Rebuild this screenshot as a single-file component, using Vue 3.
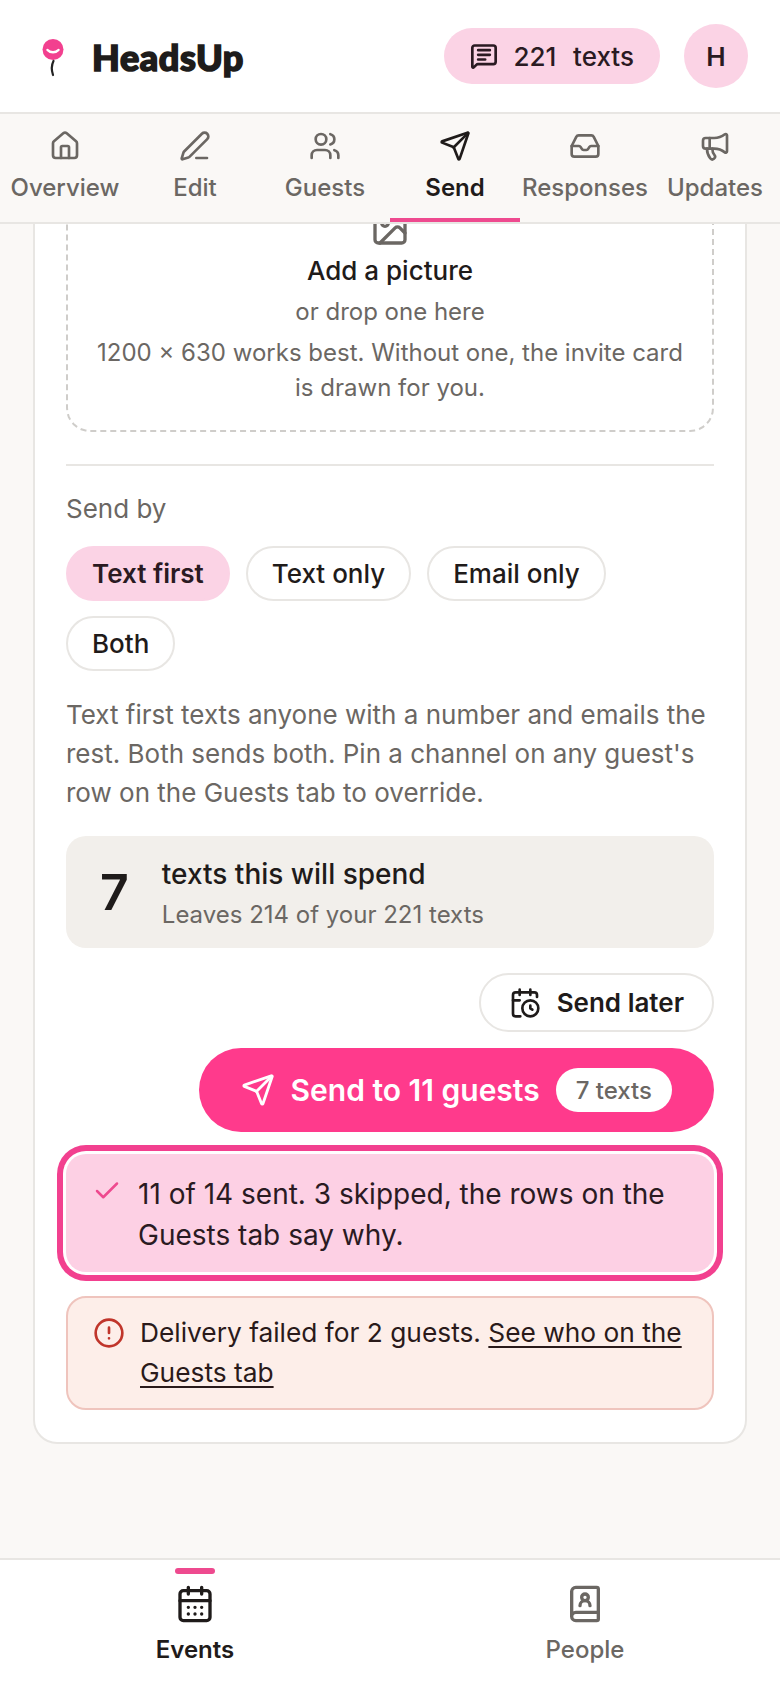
<template>
  <div class="app">
    <header class="topbar">
      <div class="brand">
        <svg class="balloon" width="28" height="44" viewBox="0 0 28 44" fill="none">
          <circle cx="14" cy="11.5" r="10.5" fill="#F2408F" />
          <path d="M8.5 12c2.500 3 8.500 3 11 0" stroke="#FFF" stroke-width="2.4" stroke-linecap="round" />
          <path d="M14.500 23c-2 4-2.500 8-.500 14" stroke="#222" stroke-width="2.200" stroke-linecap="round" />
        </svg>
        <span class="wordmark">HeadsUp</span>
      </div>
      <div class="top-right">
        <div class="credits">
          <svg class="ico credits-ico" viewBox="0 0 24 24">
            <path d="M22 17a2 2 0 0 1-2 2H6.828a2 2 0 0 0-1.414.586l-2.202 2.202A.71.71 0 0 1 2 21.286V5a2 2 0 0 1 2-2h16a2 2 0 0 1 2 2z" />
            <path d="M7 7h10M7 11h10M7 15h6" />
          </svg>
          <span class="credits-text">221&nbsp; texts</span>
        </div>
        <div class="avatar">H</div>
      </div>
    </header>

    <nav class="tabs">
      <div v-for="t in tabs" :key="t.label" class="tab" :class="{ active: t.label === 'Send' }">
        <svg class="ico" viewBox="0 0 24 24"><path v-for="d in t.paths" :key="d" :d="d" /></svg>
        <span>{{ t.label }}</span>
      </div>
    </nav>

    <main class="content">
      <section class="card">
        <div class="drop">
          <svg class="ico drop-ico" viewBox="0 0 24 24">
            <rect x="3" y="3" width="18" height="18" rx="2" />
            <circle cx="9" cy="9" r="2" />
            <path d="m21 15-3.086-3.086a2 2 0 0 0-2.828 0L6 21" />
          </svg>
          <div class="drop-title">Add a picture</div>
          <div class="drop-sub">or drop one here</div>
          <div class="drop-hint">1200 × 630 works best. Without one, the invite card is drawn for you.</div>
        </div>

        <hr class="rule" />

        <div class="send-by">Send by</div>
        <div class="chips">
          <span class="chip on">Text first</span>
          <span class="chip">Text only</span>
          <span class="chip">Email only</span>
          <span class="chip">Both</span>
        </div>
        <p class="help">Text first texts anyone with a number and emails the rest. Both sends both. Pin a channel on any guest's row on the Guests tab to override.</p>

        <div class="spend">
          <span class="spend-num">7</span>
          <div class="spend-copy">
            <div class="spend-title">texts this will spend</div>
            <div class="spend-sub">Leaves 214 of your 221 texts</div>
          </div>
        </div>

        <div class="actions">
          <button class="later">
            <svg class="ico" viewBox="0 0 24 24">
              <path d="M21 7.500V6a2 2 0 0 0-2-2H5a2 2 0 0 0-2 2v14a2 2 0 0 0 2 2h3.500" />
              <path d="M16 2v4M8 2v4M3 10h5" />
              <circle cx="16" cy="16" r="6" />
              <path d="M16 14v2l1.500 1" />
            </svg>
            Send later
          </button>
          <button class="send">
            <svg class="ico send-ico" viewBox="0 0 24 24">
              <path d="M14.536 21.686a.5.5 0 0 0 .937-.024l6.500-19a.496.496 0 0 0-.635-.635l-19 6.500a.5.5 0 0 0-.024.937l7.930 3.180a2 2 0 0 1 1.112 1.110z" />
              <path d="m21.854 2.147-10.940 10.939" />
            </svg>
            Send to 11 guests
            <span class="send-badge">7 texts</span>
          </button>
        </div>

        <div class="notice success">
          <svg class="check" viewBox="0 0 24 24"><path d="M20 6 9 17l-5-5" /></svg>
          <span>11 of 14 sent. 3 skipped, the rows on the Guests tab say why.</span>
        </div>
        <div class="notice failed">
          <svg class="ico fail-ico" viewBox="0 0 24 24">
            <circle cx="12" cy="12" r="10" />
            <path d="M12 8v4M12 16h.01" />
          </svg>
          <span>Delivery failed for 2 guests. <a>See who on the Guests tab</a></span>
        </div>
      </section>
    </main>

    <footer class="bottom">
      <div class="bottom-item active">
        <span class="marker"></span>
        <svg class="ico big" viewBox="0 0 24 24">
          <rect x="3" y="4" width="18" height="18" rx="2" />
          <path d="M8 2v4M16 2v4M3 10h18" />
          <path d="M8 14h.01M12 14h.01M16 14h.01M8 18h.01M12 18h.01M16 18h.01" />
        </svg>
        <span>Events</span>
      </div>
      <div class="bottom-item">
        <svg class="ico big" viewBox="0 0 24 24">
          <path d="M15 13a3 3 0 1 0-6 0" />
          <path d="M4 19.500v-15A2.500 2.500 0 0 1 6.500 2H19a1 1 0 0 1 1 1v18a1 1 0 0 1-1 1H6.500a1 1 0 0 1 0-5H20" />
          <circle cx="12" cy="8" r="2" />
        </svg>
        <span>People</span>
      </div>
    </footer>
  </div>
</template>

<script setup>
const tabs = [
  { label: 'Overview', paths: ['M15 21v-8a1 1 0 0 0-1-1h-4a1 1 0 0 0-1 1v8', 'M3 10a2 2 0 0 1 .709-1.528l7-6a2 2 0 0 1 2.582 0l7 6A2 2 0 0 1 21 10v9a2 2 0 0 1-2 2H5a2 2 0 0 1-2-2z'] },
  { label: 'Edit', paths: ['M13 21h8', 'M21.174 6.812a1 1 0 0 0-3.986-3.987L3.842 16.174a2 2 0 0 0-.5.83l-1.321 4.352a.5.5 0 0 0 .623.622l4.353-1.32a2 2 0 0 0 .83-.497z'] },
  { label: 'Guests', paths: ['M16 21v-2a4 4 0 0 0-4-4H6a4 4 0 0 0-4 4v2', 'M13 7a4 4 0 1 1-8 0 4 4 0 0 1 8 0z', 'M22 21v-2a4 4 0 0 0-3-3.870', 'M16 3.130a4 4 0 0 1 0 7.750'] },
  { label: 'Send', paths: ['M14.536 21.686a.5.5 0 0 0 .937-.024l6.500-19a.496.496 0 0 0-.635-.635l-19 6.500a.5.5 0 0 0-.024.937l7.930 3.180a2 2 0 0 1 1.112 1.110z', 'm21.854 2.147-10.940 10.939'] },
  { label: 'Responses', paths: ['M2 12h5.500c.6 0 1 .3 1.300.8l.7 1.200c.3.600.8 1 1.500 1h2c.7 0 1.200-.4 1.500-1l.7-1.200c.3-.5.7-.8 1.300-.8H22', 'M5.450 5.110 2 12v6a2 2 0 0 0 2 2h16a2 2 0 0 0 2-2v-6l-3.450-6.890A2 2 0 0 0 16.760 4H7.240a2 2 0 0 0-1.790 1.110z'] },
  { label: 'Updates', paths: ['M11 6a13 13 0 0 0 8.400-2.800A1 1 0 0 1 21 4v12a1 1 0 0 1-1.600.8A13 13 0 0 0 11 14H5a2 2 0 0 1-2-2V8a2 2 0 0 1 2-2z', 'M6 14a12 12 0 0 0 2.400 7.200 2 2 0 0 0 3.200-2.400A8 8 0 0 1 10 14', 'M8 6v8'] },
]
</script>

<style>
html, body { margin: 0; background: #FAF8F6; }
</style>

<style scoped>
.app {
  width: 780px; height: 1688px;
  display: flex; flex-direction: column;
  font-family: Inter, "Liberation Sans", sans-serif;
  color: #1F1B1A; background: #FAF8F6;
  overflow: hidden;
}

.ico {
  width: 32px; height: 32px; flex-shrink: 0;
  fill: none; stroke: currentColor; stroke-width: 2;
  stroke-linecap: round; stroke-linejoin: round;
}

/* Top bar */
.topbar {
  height: 112px; flex-shrink: 0; box-sizing: content-box;
  display: flex; align-items: center; justify-content: space-between;
  background: #fff; border-bottom: 2px solid #E8E6E3;
  padding-right: 32px; padding-left: 39px;
}
.brand { display: flex; align-items: center; gap: 25px; margin-top: 2px; }
.balloon { display: block; margin-top: 6px; }
.wordmark {
  font-family: Lato, sans-serif; font-weight: 900; font-size: 36px;
  color: #1E1C1B; -webkit-text-stroke: 1.6px #1E1C1B; letter-spacing: 0.6px;
}
.top-right { display: flex; align-items: center; gap: 24px; }
.credits {
  height: 56px; padding: 0 26px;
  display: flex; align-items: center; gap: 15px;
  background: #FBD3E5; border-radius: 28px;
  font-size: 26px; font-weight: 500; color: #2A1A22; word-spacing: 1.5px;
}
.credits-ico { width: 28px; height: 28px; stroke-width: 2.3; }
.avatar {
  width: 64px; height: 64px; border-radius: 50%;
  background: #FBD3E5; color: #2A1A22;
  display: flex; align-items: center; justify-content: center;
  font-size: 26px; font-weight: 600;
}

/* Tabs */
.tabs {
  flex-shrink: 0; height: 108px;
  display: grid; grid-template-columns: repeat(6, 130px);
  border-bottom: 2px solid #E8E6E3; background: #FAF8F6;
}
.tab {
  position: relative;
  display: flex; flex-direction: column; align-items: center; gap: 11px;
  padding-top: 16px;
  font-size: 24px; font-weight: 500; color: #6B6763; white-space: nowrap;
}
.tab.active { color: #1F1B1A; font-weight: 600; }
.tab.active::after {
  content: ''; position: absolute; left: 0; right: 0; bottom: 0;
  height: 4px; background: #EE4A8F;
}

/* Scrolled content */
.content {
  flex: 1; min-height: 0; overflow: hidden;
  display: flex; flex-direction: column; justify-content: flex-end;
  padding: 0 33px 114px;
}
.card {
  flex-shrink: 0;
  background: #fff; border: 2px solid #E8E6E3; border-radius: 24px;
  padding: 0 31px 32px;
}

.drop {
  border: 2px dashed #CFCDCA; border-radius: 24px;
  padding: 24px 24px 25px; text-align: center;
}
.drop-ico { width: 40px; height: 40px; color: #6B6763; display: block; margin: 0 auto 4px; }
.drop-title { font-size: 26px; font-weight: 500; line-height: 38px; }
.drop-sub, .drop-hint { font-size: 24px; color: #6B6763; }
.drop-sub { line-height: 37px; margin-top: 3px; }
.drop-hint { line-height: 35px; margin-top: 5px; }

.rule { border: 0; border-top: 2px solid #E8E6E3; margin: 32px 0 0; }

.send-by { margin-top: 25px; font-size: 26px; line-height: 36px; color: #6B6763; }

.chips { display: flex; flex-wrap: wrap; gap: 15px 16px; margin-top: 19px; }
.chip {
  height: 55px; padding: 0 24px; box-sizing: border-box;
  display: flex; align-items: center;
  border: 2px solid #E8E6E3; border-radius: 28px;
  font-size: 26px; font-weight: 500;
}
.chip.on { background: #FBD3E5; border-color: #FBD3E5; color: #2A1A22; font-weight: 600; }

.help { margin: 24px 0 0; font-size: 26px; line-height: 39px; color: #6B6763; }

.spend {
  margin-top: 24px; height: 112px; box-sizing: border-box;
  display: flex; align-items: center; gap: 33px; padding: 0 34px;
  background: #F2EFEB; border-radius: 20px;
}
.spend-num { font-size: 50px; font-weight: 600; }
.spend-copy { padding-top: 2px; }
.spend-title { font-size: 28px; font-weight: 500; line-height: 40px; }
.spend-sub { font-size: 24px; color: #6B6763; line-height: 36px; margin-top: 3px; }

.actions { display: flex; flex-direction: column; align-items: flex-end; gap: 16px; margin-top: 25px; }
button { font-family: inherit; cursor: pointer; }
.later {
  height: 59px; padding: 0 28px 0 28px;
  display: flex; align-items: center; gap: 16px;
  background: #fff; border: 2px solid #E8E6E3; border-radius: 30px;
  font-size: 26px; font-weight: 600; color: #1F1B1A;
}
.send {
  height: 84px; padding: 0 42px 0 42px;
  display: flex; align-items: center; gap: 16px;
  background: #FF3A8C; border: 0; border-radius: 42px;
  font-size: 30px; font-weight: 600; color: #fff;
}
.send-ico { width: 34px; height: 34px; }
.send-badge {
  height: 44px; padding: 0 20px;
  display: flex; align-items: center;
  background: #fff; border-radius: 22px;
  font-size: 24px; font-weight: 500; color: #6B6763;
}

.notice { display: flex; border-radius: 20px; }
.success {
  margin-top: 22px; padding: 20px 24px 16px 26px; gap: 16px;
  background: #FDD0E4; line-height: 41px; font-size: 28px;
  box-shadow: 0 0 0 3px #fff, 0 0 0 9px #F2408F;
  color: #2A1A22;
}
.check { width: 30px; height: 30px; margin-top: 2px; fill: none; stroke: #EE4A8F; stroke-width: 2; flex-shrink: 0; stroke-linecap: round; stroke-linejoin: round; }
.failed {
  margin-top: 24px; padding: 15px 24px 15px 25px; gap: 15px;
  background: #FDEEE9; border: 2px solid #EFC4BD; line-height: 40px;
  color: #2A1A1A; font-size: 26.3px;
}
.fail-ico { color: #C0352B; margin-top: 4px; }
.failed a { color: inherit; text-decoration: underline; text-underline-offset: 4px; }

/* Bottom nav */
.bottom {
  flex-shrink: 0; height: 128px;
  display: grid; grid-template-columns: 1fr 1fr;
  background: #fff; border-top: 2px solid #E8E6E3;
}
.bottom-item {
  position: relative;
  display: flex; flex-direction: column; align-items: center; gap: 11px;
  padding-top: 24px;
  font-size: 24px; font-weight: 500; color: #6B6763;
}
.bottom-item.active { color: #1F1B1A; font-weight: 600; }
.marker {
  position: absolute; top: 8px; left: 50%; margin-left: -20px;
  width: 40px; height: 6px; border-radius: 3px; background: #EE4A8F;
}
.big { width: 40px; height: 40px; }
</style>
